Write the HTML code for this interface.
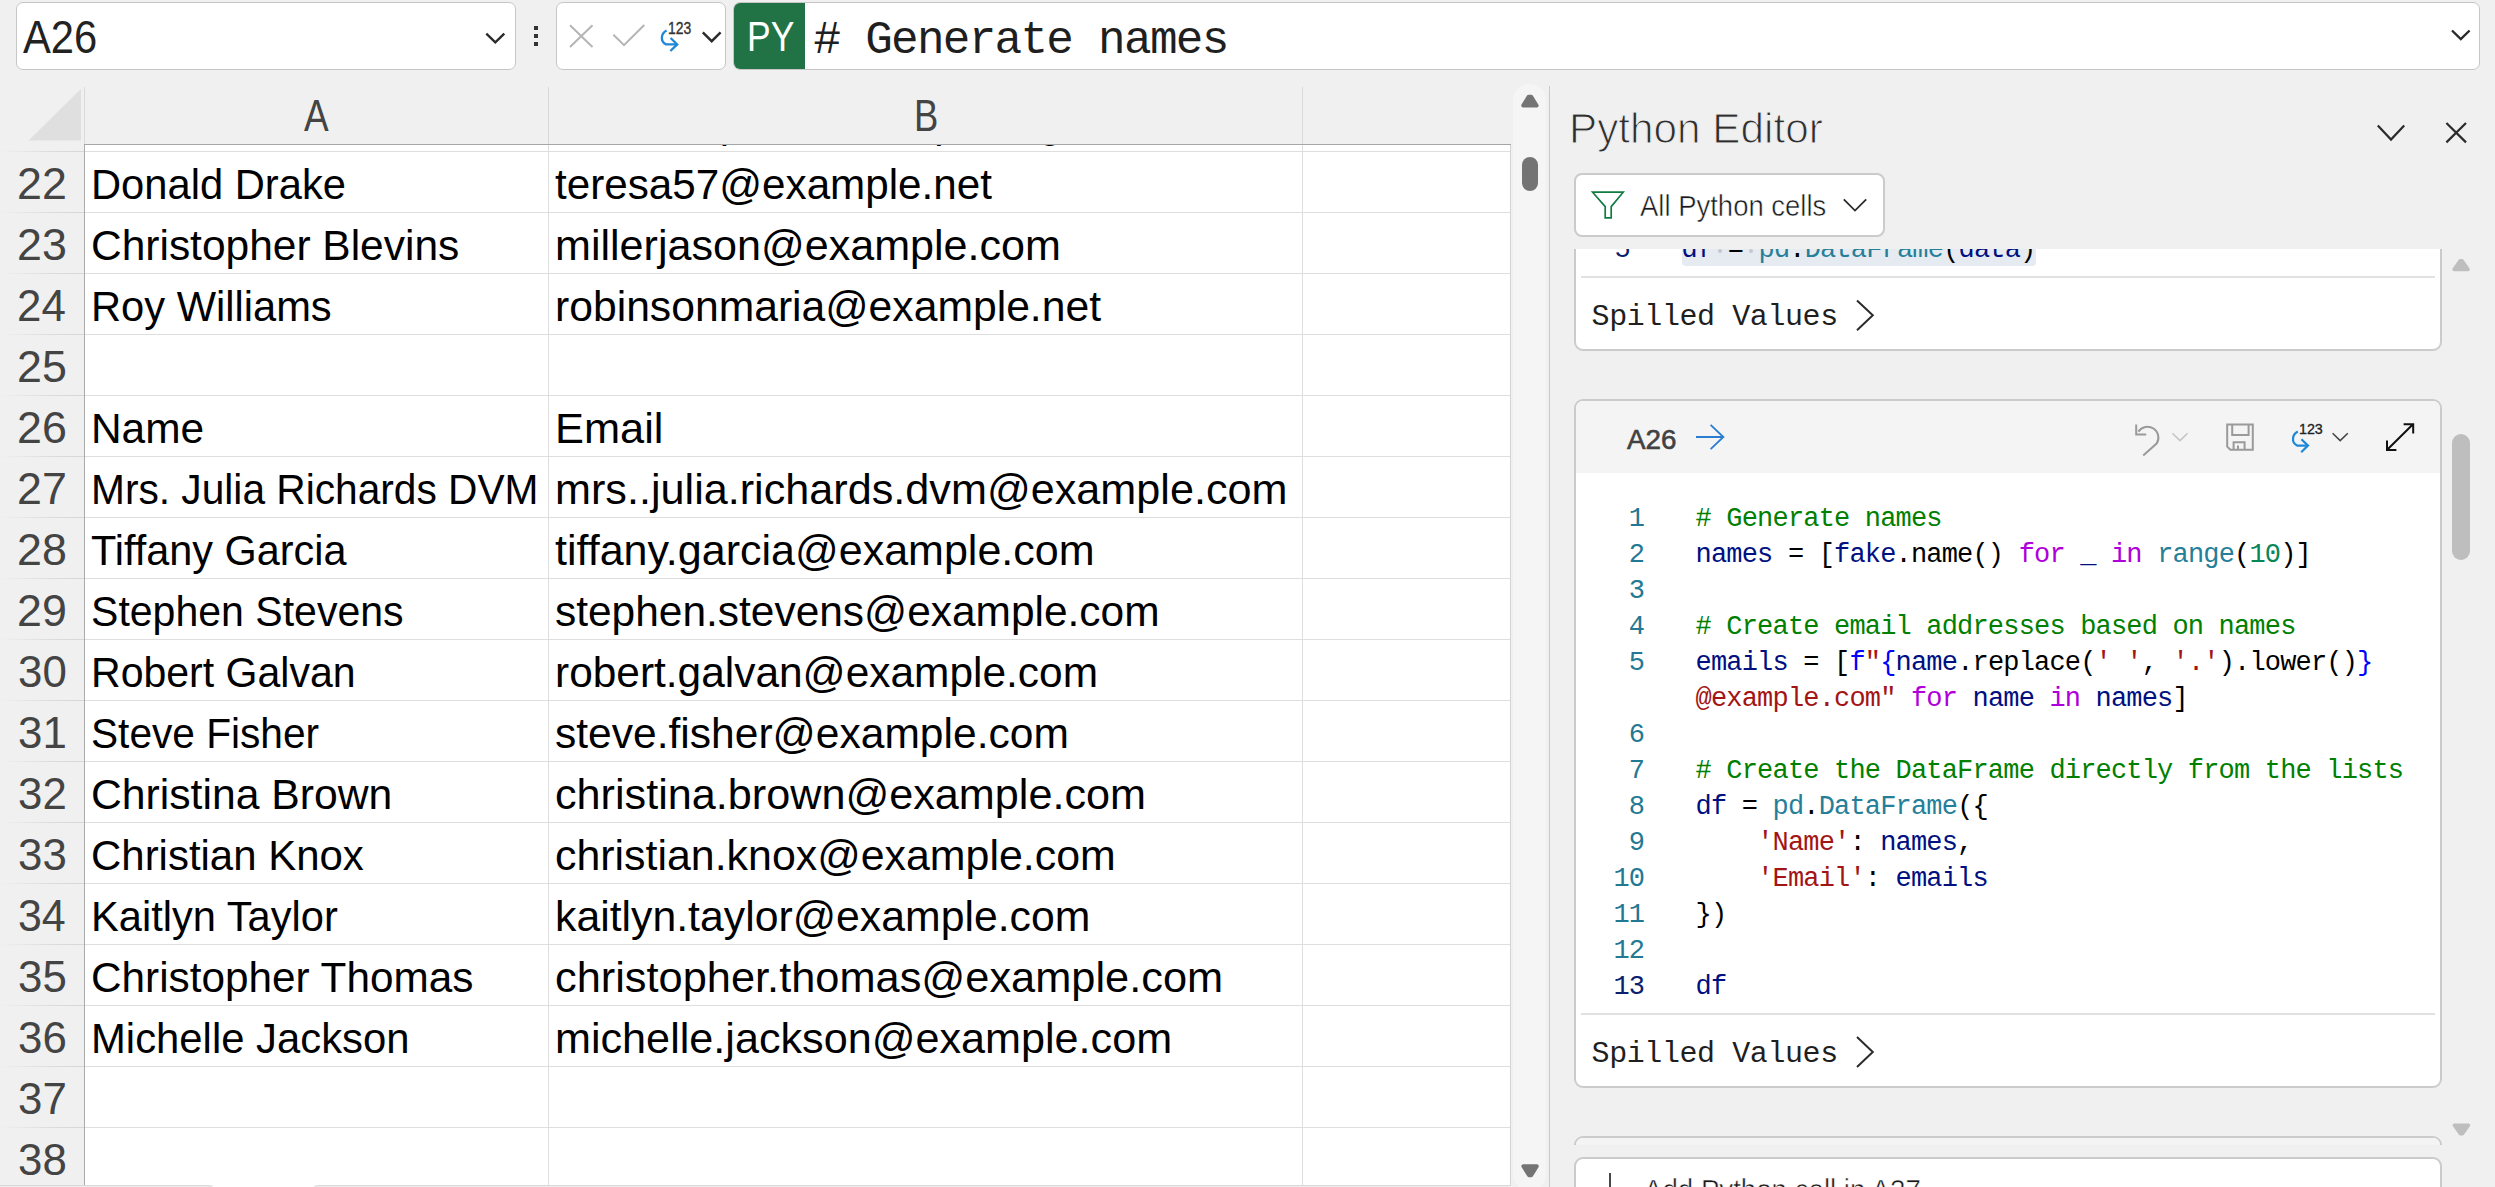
<!DOCTYPE html>
<html><head><meta charset="utf-8"><title>Excel</title><style>
*{box-sizing:border-box;margin:0;padding:0}
html,body{width:2495px;height:1187px;overflow:hidden;background:#f0f0f0;font-family:"Liberation Sans",sans-serif}
.abs{position:absolute}
.t{position:absolute;white-space:pre;line-height:1;transform-origin:0 0;display:block}
.box{position:absolute;background:#fff;border:1px solid #c6c6c6;border-radius:7px}
.hl{position:absolute;height:1px;background:#dedede}
.vl{position:absolute;width:1px;background:#dedede}
.rh{position:absolute;left:0;width:84px;height:1px;background:linear-gradient(to right,rgba(222,222,222,0) 0,#dcdcdc 60%,#d6d6d6 100%)}
.card{position:absolute;left:1574px;width:868px;background:#fff;border:2px solid #cbcbcb;border-radius:9px;overflow:hidden}
.code{position:absolute;white-space:pre;line-height:1;font-family:"Liberation Mono",monospace;font-size:27px;letter-spacing:-0.82px;color:#000}
.ln{position:absolute;white-space:pre;line-height:1;font-family:"Liberation Mono",monospace;font-size:27px;letter-spacing:-0.82px;color:#237893;text-align:right;width:60px}
.c{color:#008000}.k{color:#af00db}.v{color:#001080}.f{color:#267f99}.n{color:#098658}.s{color:#a31515}.b{color:#0000ff}
.sv{position:absolute;white-space:pre;line-height:1;font-family:"Liberation Mono",monospace;font-size:30px;letter-spacing:-0.42px;color:#1f1f1f}
</style></head>
<body>
<div id="root" style="position:relative;width:2495px;height:1187px;overflow:hidden;background:#f0f0f0">
<div class="abs" style="left:85px;top:145px;width:1425px;height:1040px;background:#fff"></div>
<div class="hl" style="left:85px;top:151px;width:1425px"></div>
<div class="rh" style="top:151px"></div>
<div class="hl" style="left:85px;top:212px;width:1425px"></div>
<div class="rh" style="top:212px"></div>
<div class="hl" style="left:85px;top:273px;width:1425px"></div>
<div class="rh" style="top:273px"></div>
<div class="hl" style="left:85px;top:334px;width:1425px"></div>
<div class="rh" style="top:334px"></div>
<div class="hl" style="left:85px;top:395px;width:1425px"></div>
<div class="rh" style="top:395px"></div>
<div class="hl" style="left:85px;top:456px;width:1425px"></div>
<div class="rh" style="top:456px"></div>
<div class="hl" style="left:85px;top:517px;width:1425px"></div>
<div class="rh" style="top:517px"></div>
<div class="hl" style="left:85px;top:578px;width:1425px"></div>
<div class="rh" style="top:578px"></div>
<div class="hl" style="left:85px;top:639px;width:1425px"></div>
<div class="rh" style="top:639px"></div>
<div class="hl" style="left:85px;top:700px;width:1425px"></div>
<div class="rh" style="top:700px"></div>
<div class="hl" style="left:85px;top:761px;width:1425px"></div>
<div class="rh" style="top:761px"></div>
<div class="hl" style="left:85px;top:822px;width:1425px"></div>
<div class="rh" style="top:822px"></div>
<div class="hl" style="left:85px;top:883px;width:1425px"></div>
<div class="rh" style="top:883px"></div>
<div class="hl" style="left:85px;top:944px;width:1425px"></div>
<div class="rh" style="top:944px"></div>
<div class="hl" style="left:85px;top:1005px;width:1425px"></div>
<div class="rh" style="top:1005px"></div>
<div class="hl" style="left:85px;top:1066px;width:1425px"></div>
<div class="rh" style="top:1066px"></div>
<div class="hl" style="left:85px;top:1127px;width:1425px"></div>
<div class="rh" style="top:1127px"></div>
<div class="vl" style="left:548px;top:145px;height:1040px"></div>
<div class="vl" style="left:548px;top:87px;height:57px;background:#d9d9d9"></div>
<div class="vl" style="left:1302px;top:145px;height:1040px"></div>
<div class="vl" style="left:1302px;top:87px;height:57px;background:#d9d9d9"></div>
<div class="vl" style="left:1510px;top:145px;height:1040px;background:#d4d4d4"></div>
<div class="vl" style="left:84px;top:87px;height:57px;background:#dadada"></div>
<div class="vl" style="left:84px;top:144px;height:1041px;background:#ababab"></div>
<div class="hl" style="left:84px;top:144px;width:1427px;background:#a6a6a6"></div>
<div class="abs" style="left:-6px;top:1185px;width:219px;height:8px;border-radius:5px 5px 0 0;background:#ececec;border-top:1px solid #dadada"></div>
<div class="abs" style="left:314px;top:1185px;width:1197px;height:8px;border-radius:5px 0 0 0;background:#ececec;border-top:1px solid #dadada"></div>
<div class="abs" style="left:213px;top:1185px;width:101px;height:2px;background:#fff"></div>
<svg class="abs" style="left:0;top:80px" width="90" height="70"><path d="M81 9 L81 60.6 L28.6 60.6 Z" fill="#dfdfdf"/></svg>
<div class="box" style="left:16px;top:2px;width:500px;height:68px"></div>
<div class="box" style="left:556px;top:2px;width:170px;height:68px"></div>
<div class="box" style="left:733px;top:2px;width:1747px;height:68px;overflow:hidden"><div class="abs" style="left:0;top:0;width:71px;height:68px;background:#217346"></div></div>
<div class="abs" style="left:534px;top:26px;width:4px;height:4px;background:#333"></div>
<div class="abs" style="left:534px;top:34px;width:4px;height:4px;background:#333"></div>
<div class="abs" style="left:534px;top:42px;width:4px;height:4px;background:#333"></div>
<div class="code" style="left:813.4px;top:17.56px;font-size:46px;letter-spacing:-1.72px;color:#1f1f1f"># Generate names</div>
<div class="abs" style="left:1513px;top:84px;width:33px;height:1107px;border-radius:16.5px;background:#f5f5f5"></div>
<div class="abs" style="left:1522px;top:157px;width:16px;height:34px;border-radius:8px;background:#747474"></div>
<div class="vl" style="left:1549px;top:86px;height:1101px;background:#c9c9c9"></div>
<div class="abs" style="left:1574px;top:173px;width:311px;height:64px;background:#fff;border:2px solid #cbcbcb;border-radius:8px"></div>
<div class="abs" style="left:1560px;top:249px;width:900px;height:896px;overflow:hidden">
<div class="card" style="left:14px;top:-149px;height:251px"></div>
<div class="card" style="left:14px;top:150px;height:689px"><div class="abs" style="left:0;top:0;width:100%;height:72px;background:#f4f4f4"></div></div>
<div class="card" style="left:14px;top:887px;height:300px"><div class="abs" style="left:0;top:0;width:100%;height:72px;background:#f4f4f4"></div></div>
</div>
<div class="abs" style="left:1682px;top:249px;width:354px;height:16.5px;background:#e5ebf1;border-radius:0 0 4px 4px"></div>
<div class="hl" style="left:1581px;top:276px;width:854px;height:2px;background:#e1e1e1"></div>
<div class="hl" style="left:1581px;top:1013px;width:854px;height:2px;background:#e1e1e1"></div>
<div class="sv" style="left:1591.6px;top:302.32px">Spilled Values</div>
<div class="sv" style="left:1591.6px;top:1038.82px">Spilled Values</div>
<div class="abs" style="left:1576px;top:249px;width:864px;height:20px;overflow:hidden">
<div class="code" style="left:105.60px;top:-11.68px"><span class="v">df</span> = <span class="f">pd</span>.<span class="f">DataFrame</span>(<span class="v">data</span>)</div>
<div class="ln" style="left:-6.18px;top:-11.68px;color:#0b216f;">5</div>
<div class="abs" style="left:142.4000000000001px;top:0.2px;width:4px;height:4px;border-radius:2px;background:#c3c8d0"></div><div class="abs" style="left:173.20000000000005px;top:0.2px;width:4px;height:4px;border-radius:2px;background:#c3c8d0"></div>
</div>
<div class="code" style="left:1695.60px;top:505.62px"><span class="c"># Generate names</span></div>
<div class="ln" style="left:1584.22px;top:505.62px;">1</div>
<div class="code" style="left:1695.60px;top:541.62px"><span class="v">names</span> = [<span class="v">fake</span>.name() <span class="k">for</span> <span class="v">_</span> <span class="k">in</span> <span class="f">range</span>(<span class="n">10</span>)]</div>
<div class="ln" style="left:1584.22px;top:541.62px;">2</div>
<div class="ln" style="left:1584.22px;top:577.62px;">3</div>
<div class="code" style="left:1695.60px;top:613.62px"><span class="c"># Create email addresses based on names</span></div>
<div class="ln" style="left:1584.22px;top:613.62px;">4</div>
<div class="code" style="left:1695.60px;top:649.62px"><span class="v">emails</span> = [<span class="b">f</span><span class="s">&quot;</span><span class="b">{</span><span class="v">name</span>.replace(<span class="s">&#x27; &#x27;</span>, <span class="s">&#x27;.&#x27;</span>).lower()<span class="b">}</span></div>
<div class="ln" style="left:1584.22px;top:649.62px;">5</div>
<div class="code" style="left:1695.60px;top:685.62px"><span class="s">@example.com&quot;</span> <span class="k">for</span> <span class="v">name</span> <span class="k">in</span> <span class="v">names</span>]</div>
<div class="ln" style="left:1584.22px;top:721.62px;">6</div>
<div class="code" style="left:1695.60px;top:757.62px"><span class="c"># Create the DataFrame directly from the lists</span></div>
<div class="ln" style="left:1584.22px;top:757.62px;">7</div>
<div class="code" style="left:1695.60px;top:793.62px"><span class="v">df</span> = <span class="f">pd</span>.<span class="f">DataFrame</span>({</div>
<div class="ln" style="left:1584.22px;top:793.62px;">8</div>
<div class="code" style="left:1695.60px;top:829.62px">    <span class="s">&#x27;Name&#x27;</span>: <span class="v">names</span>,</div>
<div class="ln" style="left:1584.22px;top:829.62px;">9</div>
<div class="code" style="left:1695.60px;top:865.62px">    <span class="s">&#x27;Email&#x27;</span>: <span class="v">emails</span></div>
<div class="ln" style="left:1584.22px;top:865.62px;">10</div>
<div class="code" style="left:1695.60px;top:901.62px">})</div>
<div class="ln" style="left:1584.22px;top:901.62px;">11</div>
<div class="ln" style="left:1584.22px;top:937.62px;">12</div>
<div class="code" style="left:1695.60px;top:973.62px"><span class="v">df</span></div>
<div class="ln" style="left:1584.22px;top:973.62px;color:#0b216f;">13</div>
<div class="card" style="top:1157px;height:100px"></div>
<div class="abs" style="left:2452px;top:434px;width:18px;height:126px;border-radius:9px;background:#bebebe"></div>
<div class="abs" style="left:0;top:145px;width:1510px;height:1042px;overflow:hidden"><span class="t" style="left:91.00px;top:17.60px;font-size:43px;color:#000;transform:scaleX(0.9697);">Donald Drake</span>
<span class="t" style="left:91.00px;top:78.60px;font-size:43px;color:#000;transform:scaleX(0.9878);">Christopher Blevins</span>
<span class="t" style="left:91.00px;top:139.60px;font-size:43px;color:#000;transform:scaleX(0.9686);">Roy Williams</span>
<span class="t" style="left:91.00px;top:261.60px;font-size:43px;color:#000;transform:scaleX(0.9859);">Name</span>
<span class="t" style="left:91.00px;top:322.60px;font-size:43px;color:#000;transform:scaleX(0.9459);">Mrs. Julia Richards DVM</span>
<span class="t" style="left:91.00px;top:383.60px;font-size:43px;color:#000;transform:scaleX(0.9633);">Tiffany Garcia</span>
<span class="t" style="left:91.00px;top:444.60px;font-size:43px;color:#000;transform:scaleX(0.9545);">Stephen Stevens</span>
<span class="t" style="left:91.00px;top:505.60px;font-size:43px;color:#000;transform:scaleX(0.9545);">Robert Galvan</span>
<span class="t" style="left:91.00px;top:566.60px;font-size:43px;color:#000;transform:scaleX(0.9450);">Steve Fisher</span>
<span class="t" style="left:91.00px;top:627.60px;font-size:43px;color:#000;transform:scaleX(0.9928);">Christina Brown</span>
<span class="t" style="left:91.00px;top:688.60px;font-size:43px;color:#000;transform:scaleX(0.9756);">Christian Knox</span>
<span class="t" style="left:91.00px;top:749.60px;font-size:43px;color:#000;transform:scaleX(0.9679);">Kaitlyn Taylor</span>
<span class="t" style="left:91.00px;top:810.60px;font-size:43px;color:#000;transform:scaleX(0.9834);">Christopher Thomas</span>
<span class="t" style="left:91.00px;top:871.60px;font-size:43px;color:#000;transform:scaleX(0.9730);">Michelle Jackson</span>
<span class="t" style="left:555.00px;top:17.60px;font-size:43px;color:#000;transform:scaleX(0.9814);">teresa57@example.net</span>
<span class="t" style="left:555.00px;top:78.60px;font-size:43px;color:#000;transform:scaleX(1.0021);">millerjason@example.com</span>
<span class="t" style="left:555.00px;top:139.60px;font-size:43px;color:#000;transform:scaleX(0.9921);">robinsonmaria@example.net</span>
<span class="t" style="left:555.00px;top:261.60px;font-size:43px;color:#000;transform:scaleX(1.0089);">Email</span>
<span class="t" style="left:555.00px;top:322.60px;font-size:43px;color:#000;transform:scaleX(1.0042);">mrs..julia.richards.dvm@example.com</span>
<span class="t" style="left:555.00px;top:383.60px;font-size:43px;color:#000;transform:scaleX(1.0008);">tiffany.garcia@example.com</span>
<span class="t" style="left:555.00px;top:444.60px;font-size:43px;color:#000;transform:scaleX(0.9869);">stephen.stevens@example.com</span>
<span class="t" style="left:555.00px;top:505.60px;font-size:43px;color:#000;transform:scaleX(0.9866);">robert.galvan@example.com</span>
<span class="t" style="left:555.00px;top:566.60px;font-size:43px;color:#000;transform:scaleX(0.9897);">steve.fisher@example.com</span>
<span class="t" style="left:555.00px;top:627.60px;font-size:43px;color:#000;transform:scaleX(1.0042);">christina.brown@example.com</span>
<span class="t" style="left:555.00px;top:688.60px;font-size:43px;color:#000;transform:scaleX(0.9973);">christian.knox@example.com</span>
<span class="t" style="left:555.00px;top:749.60px;font-size:43px;color:#000;transform:scaleX(0.9945);">kaitlyn.taylor@example.com</span>
<span class="t" style="left:555.00px;top:810.60px;font-size:43px;color:#000;transform:scaleX(1.0083);">christopher.thomas@example.com</span>
<span class="t" style="left:555.00px;top:871.60px;font-size:43px;color:#000;transform:scaleX(1.0037);">michelle.jackson@example.com</span>
<span class="t" style="left:91.00px;top:-43.70px;font-size:43px;color:#000;transform:scaleX(0.9530);">Michael Barnes</span>
<span class="t" style="left:555.00px;top:-43.70px;font-size:43px;color:#000;transform:scaleX(0.9716);">michaelspan@example.org</span>
<span class="t" style="left:16.86px;top:-43.85px;font-size:44px;color:#444;transform:scaleX(1.0182);">21</span>
<span class="t" style="left:16.86px;top:17.15px;font-size:44px;color:#444;transform:scaleX(1.0182);">22</span>
<span class="t" style="left:16.86px;top:78.15px;font-size:44px;color:#444;transform:scaleX(1.0182);">23</span>
<span class="t" style="left:16.91px;top:139.15px;font-size:44px;color:#444;transform:scaleX(0.9963);">24</span>
<span class="t" style="left:16.86px;top:200.15px;font-size:44px;color:#444;transform:scaleX(1.0182);">25</span>
<span class="t" style="left:16.86px;top:261.15px;font-size:44px;color:#444;transform:scaleX(1.0182);">26</span>
<span class="t" style="left:16.86px;top:322.15px;font-size:44px;color:#444;transform:scaleX(1.0182);">27</span>
<span class="t" style="left:16.86px;top:383.15px;font-size:44px;color:#444;transform:scaleX(1.0182);">28</span>
<span class="t" style="left:16.86px;top:444.15px;font-size:44px;color:#444;transform:scaleX(1.0182);">29</span>
<span class="t" style="left:17.90px;top:505.15px;font-size:44px;color:#444;transform:scaleX(0.9963);">30</span>
<span class="t" style="left:17.90px;top:566.15px;font-size:44px;color:#444;transform:scaleX(0.9963);">31</span>
<span class="t" style="left:17.90px;top:627.15px;font-size:44px;color:#444;transform:scaleX(0.9963);">32</span>
<span class="t" style="left:17.90px;top:688.15px;font-size:44px;color:#444;transform:scaleX(0.9963);">33</span>
<span class="t" style="left:17.92px;top:749.15px;font-size:44px;color:#444;transform:scaleX(0.9753);">34</span>
<span class="t" style="left:17.90px;top:810.15px;font-size:44px;color:#444;transform:scaleX(0.9963);">35</span>
<span class="t" style="left:17.90px;top:871.15px;font-size:44px;color:#444;transform:scaleX(0.9963);">36</span>
<span class="t" style="left:17.90px;top:932.15px;font-size:44px;color:#444;transform:scaleX(0.9963);">37</span>
<span class="t" style="left:17.90px;top:993.15px;font-size:44px;color:#444;transform:scaleX(0.9963);">38</span></div>
<span class="t" style="left:303.90px;top:93.75px;font-size:44px;color:#444;transform:scaleX(0.8400);">A</span>
<span class="t" style="left:914.02px;top:93.75px;font-size:44px;color:#444;transform:scaleX(0.8280);">B</span>
<span class="t" style="left:23.00px;top:13.86px;font-size:46px;color:#222;transform:scaleX(0.9070);">A26</span>
<span class="t" style="left:747.06px;top:15.85px;font-size:42px;color:#fff;transform:scaleX(0.8451);">PY</span>
<span class="t" style="left:1568.62px;top:108.42px;font-size:42.5px;color:#2e2e2e;transform:scaleX(0.9945);-webkit-text-stroke:1.1px #f0f0f0;">Python Editor</span>
<span class="t" style="left:1640.40px;top:190.96px;font-size:29.7px;color:#1a1a1a;transform:scaleX(0.9254);-webkit-text-stroke:0.5px #fff;">All Python cells</span>
<span class="t" style="left:1626.50px;top:424.87px;font-size:28.5px;color:#424242;transform:scaleX(0.9747);-webkit-text-stroke:0.6px #424242;">A26</span>
<span class="t" style="left:1644.10px;top:1174.66px;font-size:29.7px;color:#1a1a1a;transform:scaleX(0.9316);-webkit-text-stroke:0.5px #fff;">Add Python cell in A27</span>
<span class="t" style="left:667.96px;top:19.93px;font-size:16.5px;color:#333;transform:scaleX(0.8424);-webkit-text-stroke:0.35px #333;">123</span>
<span class="t" style="left:2298.88px;top:421.38px;font-size:15.5px;color:#222;transform:scaleX(0.9199);-webkit-text-stroke:0.35px #222;">123</span>
<svg class="abs" style="left:0;top:0" width="2495" height="1187" fill="none" stroke-linecap="butt" stroke-linejoin="miter">
<path d="M486.3 33.6 L495.3 42.3 L504.3 33.6" stroke="#2b2b2b" stroke-width="2.4"/>
<path d="M570 25.2 L592.5 47 M592.5 25.2 L570 47" stroke="#b5b5b5" stroke-width="2"/>
<path d="M613.4 34.8 L624 45.2 L644.3 25" stroke="#b5b5b5" stroke-width="2"/>
<path d="M666.6 30.6 C660.8 33.6 660 41.5 666 44.4 L676 44.4" stroke="#1e88d8" stroke-width="2.3"/>
<path d="M670.6 38 L677.2 44.4 L670.4 51" stroke="#1e88d8" stroke-width="2.3"/>
<path d="M702.8 32.4 L711.7 41.2 L720.6 32.4" stroke="#2b2b2b" stroke-width="2.4"/>
<path d="M2452 30.5 L2460.8 39 L2469.6 30.5" stroke="#2b2b2b" stroke-width="2.4"/>
<path d="M1528.6 96.8 L1531.2 96.8 L1536.6 105.6 L1523.2 105.6 Z" fill="#747474" stroke="#747474" stroke-width="4" stroke-linejoin="round"/>
<path d="M1523.4 1166.3 L1536.8 1166.3 L1531.2 1175.2 L1529 1175.2 Z" fill="#747474" stroke="#747474" stroke-width="4" stroke-linejoin="round"/>
<path d="M2377.8 125.6 L2391 139.6 L2404.2 125.6" stroke="#2b2b2b" stroke-width="2.2"/>
<path d="M2446.4 123 L2466 142.4 M2466 123 L2446.4 142.4" stroke="#2b2b2b" stroke-width="2.2"/>
<path d="M1592.6 192.2 L1623.2 192.2 L1611.2 206.6 L1611.2 217.8 L1605.2 217.8 L1605.2 206.6 Z" stroke="#107c41" stroke-width="1.7" stroke-linejoin="miter"/>
<path d="M1843.8 199.4 L1855 210.6 L1866.2 199.4" stroke="#2b2b2b" stroke-width="1.8"/>
<path d="M1857 300.4 L1872.8 315.29999999999995 L1857 330.2" stroke="#2b2b2b" stroke-width="2"/>
<path d="M1857 1037 L1872.8 1052.0 L1857 1067" stroke="#2b2b2b" stroke-width="2"/>
<path d="M1696 437 L1723 437 M1710.6 424.8 L1723.4 437 L1710.6 449.2" stroke="#2b7cd3" stroke-width="1.8"/>
<path d="M2136.2 424.6 L2136.2 434.4 L2146.2 434.4" stroke="#9a9a9a" stroke-width="2"/>
<path d="M2138.4 431.6 A10.4 10.4 0 1 1 2156.6 443.6 L2143.2 455.6" stroke="#9a9a9a" stroke-width="2"/>
<path d="M2172.4 433.2 L2180 440.6 L2187.6 433.2" stroke="#c4c4c4" stroke-width="1.5"/>
<path d="M2227.2 424.4 L2252.8 424.4 L2252.8 449.8 L2230.4 449.8 L2227.2 446.6 Z" stroke="#9a9a9a" stroke-width="2"/>
<path d="M2232.2 424.4 L2232.2 435 L2248.6 435 L2248.6 424.4" stroke="#9a9a9a" stroke-width="2"/>
<path d="M2233.6 449.8 L2233.6 442.2 L2244.6 442.2 L2244.6 449.8 M2238 449.8 L2238 445.6" stroke="#9a9a9a" stroke-width="2"/>
<path d="M2297.8 431.6 C2292 434.6 2291 442.6 2297.2 445.6 L2307 445.6" stroke="#1e88d8" stroke-width="2.2"/>
<path d="M2301.4 439.2 L2308 445.6 L2301.2 452.2" stroke="#1e88d8" stroke-width="2.2"/>
<path d="M2332.6 433.2 L2340.2 440.6 L2347.8 433.2" stroke="#444" stroke-width="1.5"/>
<path d="M2387.2 449.8 L2413 424.2 M2403.6 424.2 L2413.2 424.2 L2413.2 433.6 M2387 440.6 L2387 450 L2396.4 450" stroke="#111" stroke-width="2"/>
<path d="M2460.2 260.8 L2462 260.8 L2468 269.4 L2454.2 269.4 Z" fill="#bebebe" stroke="#bebebe" stroke-width="3.6" stroke-linejoin="round"/>
<path d="M2454.4 1125.2 L2468.4 1125.2 L2462.4 1133.6 L2460.4 1133.6 Z" fill="#bebebe" stroke="#bebebe" stroke-width="3.6" stroke-linejoin="round"/>
<path d="M1610 1173 L1610 1187" stroke="#333" stroke-width="1.8"/>
</svg>
</div>
</body></html>
